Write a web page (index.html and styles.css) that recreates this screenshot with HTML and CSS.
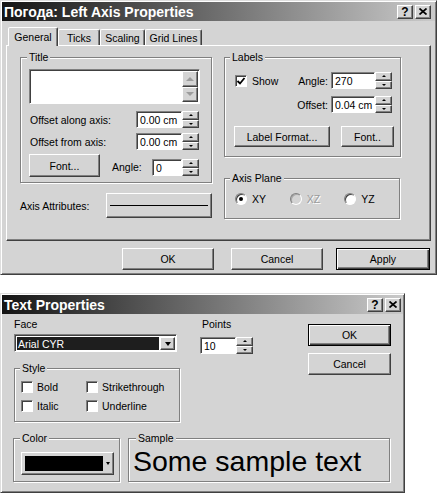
FILE: index.html
```html
<!DOCTYPE html>
<html lang="ru">
<head>
    <meta charset="UTF-8">
    <meta name="viewport" content="width=device-width, initial-scale=1.0">
    <title>Left Axis Properties</title>
    <link rel="stylesheet" href="styles.css">
</head>
<body>
    <div class="dlg dlg-axis">
        <div class="titlebar">
            <span class="title">Погода: Left Axis Properties</span>
            <div class="caps">
                <span class="cap">?</span>
                <span class="cap"><svg width="8" height="7" viewBox="0 0 8 7"><path d="M0.5 0.5 L7.5 6.5 M7.5 0.5 L0.5 6.5" stroke="#000" stroke-width="1.7"/></svg></span>
            </div>
        </div>

        <div class="tabs">
            <div class="tab active t-general">General</div>
            <div class="tab t-ticks">Ticks</div>
            <div class="tab t-scaling">Scaling</div>
            <div class="tab t-grid">Grid Lines</div>
        </div>

        <div class="panel">
            <div class="col-left">
                <div class="grp grp-title">
                    <span class="grp-label">Title</span>
                    <div class="memo">
                        <div class="vscroll">
                            <span class="btn3d sbtn"><i class="tri tri-up"></i></span>
                            <span class="btn3d sbtn"><i class="tri tri-down"></i></span>
                        </div>
                    </div>
                    <div class="frow frow-along">
                        <span class="lbl w-offset">Offset along axis:</span>
                        <span class="field w-cm">0.00 cm</span>
                        <span class="spin"><span class="btn3d sp"><i class="arr arr-up"></i></span><span class="btn3d sp"><i class="arr arr-down"></i></span></span>
                    </div>
                    <div class="frow frow-from">
                        <span class="lbl w-offset">Offset from axis:</span>
                        <span class="field w-cm">0.00 cm</span>
                        <span class="spin"><span class="btn3d sp"><i class="arr arr-up"></i></span><span class="btn3d sp"><i class="arr arr-down"></i></span></span>
                    </div>
                    <div class="frow frow-font">
                        <span class="btn3d btn btn-font">Font...</span>
                        <span class="lbl w-angle">Angle:</span>
                        <span class="field w-small">0</span>
                        <span class="spin"><span class="btn3d sp"><i class="arr arr-up"></i></span><span class="btn3d sp"><i class="arr arr-down"></i></span></span>
                    </div>
                </div>

                <div class="axis-row">
                    <span class="lbl w-axis">Axis Attributes:</span>
                    <span class="btn3d btn btn-axis"><span class="axis-line"></span></span>
                </div>
            </div>

            <div class="col-right">
                <div class="grp grp-labels">
                    <span class="grp-label">Labels</span>
                    <div class="frow frow-show">
                        <span class="chk-wrap">
                            <span class="chk"><svg width="10" height="10" viewBox="0 0 10 10"><path d="M1.5 5 L4 7.5 L8.5 2" fill="none" stroke="#000" stroke-width="1.8"/></svg></span>
                            <span>Show</span>
                        </span>
                        <span class="lbl w-lab">Angle:</span>
                        <span class="field w-cm2">270</span>
                        <span class="spin"><span class="btn3d sp"><i class="arr arr-up"></i></span><span class="btn3d sp"><i class="arr arr-down"></i></span></span>
                    </div>
                    <div class="frow frow-offs">
                        <span class="lbl w-lab">Offset:</span>
                        <span class="field w-cm2">0.04 cm</span>
                        <span class="spin"><span class="btn3d sp"><i class="arr arr-up"></i></span><span class="btn3d sp"><i class="arr arr-down"></i></span></span>
                    </div>
                    <div class="brow">
                        <span class="btn3d btn btn-lformat">Label Format...</span>
                        <span class="btn3d btn btn-lfont">Font..</span>
                    </div>
                </div>

                <div class="grp grp-plane">
                    <span class="grp-label">Axis Plane</span>
                    <div class="radios">
                        <span class="radio-item"><span class="radio on"><span class="dot"></span></span>XY</span>
                        <span class="radio-item off"><span class="radio"></span>XZ</span>
                        <span class="radio-item"><span class="radio"></span>YZ</span>
                    </div>
                </div>
            </div>
        </div>

        <div class="btn-row">
            <span class="btn3d btn btn-ok">OK</span>
            <span class="btn3d btn btn-cancel">Cancel</span>
            <span class="btn btn-default btn-apply">Apply</span>
        </div>
    </div>

    <div class="dlg dlg-text">
        <div class="titlebar">
            <span class="title">Text Properties</span>
            <div class="caps">
                <span class="cap">?</span>
                <span class="cap"><svg width="8" height="7" viewBox="0 0 8 7"><path d="M0.5 0.5 L7.5 6.5 M7.5 0.5 L0.5 6.5" stroke="#000" stroke-width="1.7"/></svg></span>
            </div>
        </div>

        <div class="top2">
            <div class="face-col">
                <div class="small-lbl">Face</div>
                <div class="combo">
                    <span class="combo-sel">Arial CYR</span>
                    <span class="btn3d combo-btn"><i class="tri-dd"></i></span>
                </div>
                <div class="grp grp-style">
                    <span class="grp-label">Style</span>
                    <div class="crow">
                        <span class="chk-item"><span class="chk"></span>Bold</span>
                        <span class="chk-item"><span class="chk"></span>Strikethrough</span>
                    </div>
                    <div class="crow">
                        <span class="chk-item"><span class="chk"></span>Italic</span>
                        <span class="chk-item"><span class="chk"></span>Underline</span>
                    </div>
                </div>
            </div>

            <div class="points-col">
                <div class="small-lbl">Points</div>
                <div class="frow frow-points">
                    <span class="field w-pts">10</span>
                    <span class="spin"><span class="btn3d sp"><i class="arr arr-up"></i></span><span class="btn3d sp"><i class="arr arr-down"></i></span></span>
                </div>
            </div>

            <div class="btn-col">
                <span class="btn btn-default btn-ok2">OK</span>
                <span class="btn3d btn btn-cancel2">Cancel</span>
            </div>
        </div>

        <div class="bot2">
            <div class="grp grp-color">
                <span class="grp-label">Color</span>
                <span class="btn3d color-btn"><span class="swatch"></span><i class="tri-sm"></i></span>
            </div>
            <div class="grp grp-sample">
                <span class="grp-label">Sample</span>
                <div class="sample-text">Some sample text</div>
            </div>
        </div>
    </div>
</body>
</html>
```

FILE: styles.css
```css
* {
    margin: 0;
    padding: 0;
    box-sizing: border-box;
}

body {
    background: #fff;
    color: #000;
    font-family: "Liberation Sans", Arial, sans-serif;
    font-size: 10.5px;
    line-height: 12px;
}

/* window frame */
.dlg {
    background: #d4d4d4;
    border: 1px solid;
    border-color: #dedede #404040 #404040 #dedede;
    box-shadow: inset 1px 1px #fff, inset -1px -1px #808080;
    padding: 1px;
}

.dlg-axis {
    width: 437px;
    height: 275px;
}

.dlg-text {
    width: 405px;
    height: 200px;
    margin-top: 18px;
}

.titlebar {
    height: 19px;
    display: flex;
    align-items: center;
    padding-left: 2px;
    background: linear-gradient(to right, #141414, #cacaca);
}

.title {
    flex: 1;
    color: #fff;
    font-size: 14px;
    font-weight: bold;
    white-space: nowrap;
}

.caps {
    display: flex;
    gap: 2px;
    margin-right: 4px;
}

.dlg-text .caps {
    margin-right: 2px;
}

.cap {
    width: 16px;
    height: 14px;
    display: flex;
    align-items: center;
    justify-content: center;
    background: #d4d4d4;
    border: 1px solid;
    border-color: #fff #404040 #404040 #fff;
    box-shadow: inset -1px -1px #808080;
    font-size: 12px;
    font-weight: bold;
}

/* common 3d bits */
.btn3d {
    background: #d4d4d4;
    border: 1px solid;
    border-color: #fff #404040 #404040 #fff;
    box-shadow: inset -1px -1px #808080;
}

.btn {
    display: flex;
    align-items: center;
    justify-content: center;
}

.btn-default {
    background: #d4d4d4;
    border: 1px solid #000;
    box-shadow: inset 1px 1px #fff, inset -1px -1px #404040, inset -2px -2px #808080;
}

.field {
    display: flex;
    align-items: center;
    height: 17px;
    padding-left: 3px;
    background: #fff;
    border: 1px solid;
    border-color: #808080 #fff #fff #808080;
    box-shadow: inset 1px 1px #404040;
    white-space: nowrap;
}

.spin {
    width: 17px;
    height: 17px;
    display: flex;
    flex-direction: column;
}

.sp {
    flex: 1;
    display: flex;
    align-items: center;
    justify-content: center;
}

.arr {
    width: 0;
    height: 0;
    border-left: 2px solid transparent;
    border-right: 2px solid transparent;
}

.arr-up {
    border-bottom: 2px solid #000;
}

.arr-down {
    border-top: 2px solid #000;
}

.lbl {
    white-space: nowrap;
}

.grp {
    border: 1px solid #808080;
    box-shadow: 1px 1px 0 #fff, inset 1px 1px 0 #fff;
}

.grp-label {
    display: block;
    width: fit-content;
    height: 12px;
    margin: -7px 0 0 6px;
    padding: 0 2px;
    background: #d4d4d4;
}

.chk {
    flex-shrink: 0;
    width: 12px;
    height: 12px;
    display: flex;
    align-items: center;
    justify-content: center;
    background: #fff;
    border: 1px solid;
    border-color: #808080 #fff #fff #808080;
    box-shadow: inset 1px 1px #404040;
}

/* tabs */
.tabs {
    display: flex;
    align-items: flex-end;
    height: 20px;
    margin: 4px 0 0 6px;
}

.tab {
    height: 16px;
    display: flex;
    align-items: center;
    justify-content: center;
    border: 1px solid;
    border-bottom: none;
    border-color: #fff #404040 transparent #fff;
    border-radius: 2px 2px 0 0;
    box-shadow: inset -1px 0 #808080;
}

.tab.active {
    height: 19px;
    margin-bottom: -1px;
    position: relative;
    z-index: 1;
    background: #d4d4d4;
}

.t-general { width: 50px; }
.t-ticks { width: 42px; }
.t-scaling { width: 45px; }
.t-grid { width: 57px; }

.panel {
    width: 425px;
    height: 196px;
    margin-left: 4px;
    display: flex;
    gap: 12px;
    padding-left: 13px;
    border: 1px solid;
    border-color: #fff #404040 #404040 #fff;
    box-shadow: inset -1px -1px #808080;
}

.col-left {
    width: 192px;
}

.col-right {
    width: 177px;
}

/* title group */
.grp-title {
    height: 126px;
    margin-top: 11px;
}

.memo {
    width: 171px;
    height: 35px;
    margin: 6px 0 0 8px;
    padding: 1px;
    display: flex;
    justify-content: flex-end;
    background: #fff;
    border: 1px solid;
    border-color: #808080 #fff #fff #808080;
    box-shadow: inset 1px 1px #404040;
}

.vscroll {
    width: 16px;
    display: flex;
    flex-direction: column;
}

.sbtn {
    flex: 1;
    display: flex;
    align-items: center;
    justify-content: center;
}

.tri {
    width: 0;
    height: 0;
    border-left: 4px solid transparent;
    border-right: 4px solid transparent;
}

.tri-up {
    border-bottom: 4px solid #9c9c9c;
}

.tri-down {
    border-top: 4px solid #9c9c9c;
}

.frow {
    display: flex;
    align-items: center;
}

.frow-along {
    margin: 7px 0 0 9px;
}

.frow-from {
    margin: 5px 0 0 9px;
}

.w-offset { width: 106px; }
.w-cm { width: 46px; }

.frow-font {
    align-items: flex-start;
    margin: 4px 0 0 8px;
}

.btn-font {
    width: 71px;
    height: 23px;
}

.w-angle {
    width: 40px;
    margin: 7px 0 0 12px;
}

.frow-font .field,
.frow-font .spin {
    margin-top: 5px;
}

.w-small { width: 30px; }

.axis-row {
    display: flex;
    align-items: center;
    margin-top: 10px;
}

.w-axis { width: 86px; }

.btn-axis {
    width: 106px;
    height: 25px;
    padding: 0 3px;
}

.axis-line {
    flex: 1;
    height: 1px;
    background: #000;
}

/* labels group */
.grp-labels {
    height: 100px;
    margin-top: 11px;
}

.grp-labels .grp-label {
    margin-left: 5px;
}

.frow-show {
    margin: 9px 0 0 10px;
}

.chk-wrap {
    width: 62px;
    display: flex;
    align-items: center;
    gap: 5px;
}

.w-lab {
    width: 34px;
    padding-right: 3px;
    text-align: right;
}

.w-cm2 { width: 44px; }

.frow-offs {
    margin: 7px 0 0 72px;
}

.brow {
    display: flex;
    gap: 11px;
    margin: 13px 0 0 9px;
}

.btn-lformat {
    width: 96px;
    height: 21px;
}

.btn-lfont {
    width: 53px;
    height: 21px;
}

.grp-plane {
    width: 176px;
    height: 41px;
    margin-top: 21px;
}

.grp-plane .grp-label {
    margin-left: 5px;
}

.radios {
    display: flex;
    margin: 9px 0 0 10px;
}

.radio-item {
    width: 58px;
    display: flex;
    align-items: center;
    gap: 5px;
}

.radio {
    width: 12px;
    height: 12px;
    display: flex;
    align-items: center;
    justify-content: center;
    border-radius: 50%;
    background: #fff;
    border: 1px solid;
    border-color: #808080 #fff #fff #808080;
    box-shadow: inset 1px 1px #404040;
}

.dot {
    width: 4px;
    height: 4px;
    border-radius: 50%;
    background: #000;
}

.radio-item.off {
    color: #9a9a9a;
    text-shadow: 1px 1px #fff;
}

.radio-item.off .radio {
    background: #d4d4d4;
    box-shadow: inset 1px 1px #a8a8a8;
}

.btn-row {
    display: flex;
    margin-top: 7px;
}

.btn-row .btn {
    height: 22px;
}

.btn-ok {
    width: 92px;
    margin-left: 120px;
}

.btn-cancel {
    width: 92px;
    margin-left: 17px;
}

.btn-apply {
    width: 94px;
    margin-left: 13px;
}

/* text properties */
.top2 {
    display: flex;
    height: 108px;
}

.face-col {
    width: 166px;
    margin-left: 12px;
}

.small-lbl {
    margin-top: 4px;
}

.combo {
    width: 163px;
    height: 18px;
    margin-top: 4px;
    padding: 2px 1px 1px 2px;
    display: flex;
    background: #fff;
    border: 1px solid;
    border-color: #808080 #fff #fff #808080;
    box-shadow: inset 1px 1px #404040;
}

.combo-sel {
    flex: 1;
    display: flex;
    align-items: center;
    padding-left: 1px;
    margin-right: 1px;
    background: #1e1e1e;
    color: #fff;
}

.combo-btn {
    width: 15px;
    display: flex;
    align-items: center;
    justify-content: center;
}

.tri-dd {
    width: 0;
    height: 0;
    border-left: 3.5px solid transparent;
    border-right: 3.5px solid transparent;
    border-top: 4px solid #000;
}

.grp-style {
    height: 54px;
    margin-top: 16px;
}

.grp-style .grp-label {
    margin-left: 5px;
}

.crow {
    display: flex;
    margin: 7px 0 0 6px;
}

.chk-item {
    width: 65px;
    flex-shrink: 0;
    display: flex;
    align-items: center;
    gap: 4px;
    white-space: nowrap;
}

.points-col {
    margin-left: 20px;
}

.points-col .small-lbl {
    padding-left: 2px;
}

.frow-points {
    margin-top: 7px;
}

.w-pts { width: 36px; }

.btn-col {
    width: 83px;
    margin: 0 12px 0 auto;
    display: flex;
    flex-direction: column;
}

.btn-ok2 {
    height: 22px;
    margin-top: 10px;
}

.btn-cancel2 {
    height: 22px;
    margin-top: 7px;
}

.bot2 {
    display: flex;
    margin-top: 16px;
}

.grp-color {
    width: 107px;
    height: 44px;
    margin-left: 11px;
}

.color-btn {
    width: 93px;
    height: 23px;
    margin: 8px 0 0 7px;
    padding: 0 3px;
    display: flex;
    align-items: center;
}

.swatch {
    width: 78px;
    height: 15px;
    background: #000;
}

.tri-sm {
    width: 0;
    height: 0;
    margin-left: 3px;
    border-left: 2.5px solid transparent;
    border-right: 2.5px solid transparent;
    border-top: 3px solid #000;
}

.grp-sample {
    width: 262px;
    height: 44px;
    margin-left: 8px;
}

.grp-sample .grp-label {
    margin-left: 7px;
}

.sample-text {
    margin-top: 3px;
    padding-left: 4px;
    font-size: 28.5px;
    line-height: 28px;
    white-space: nowrap;
}
```
